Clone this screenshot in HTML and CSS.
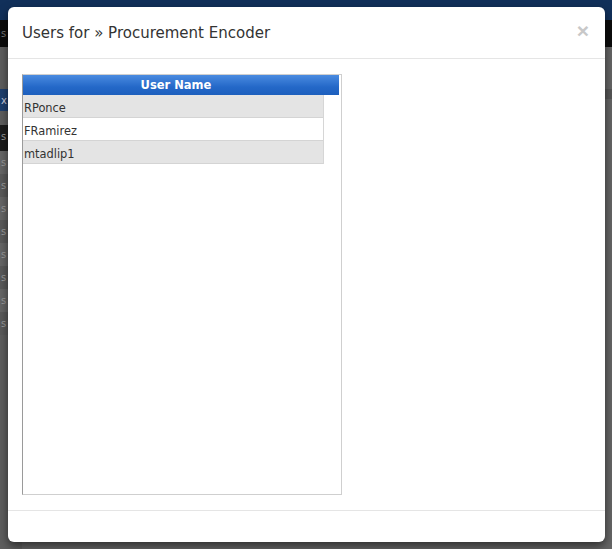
FILE: index.html
```html
<!DOCTYPE html>
<html>
<head>
<meta charset="utf-8">
<link rel="stylesheet" href="styles.css">
</head>
<body>
<div class="page">
  <div class="topbar"></div>
  <div class="subbar"><span class="subtext">s</span></div>
  <div class="main">
    <div class="sidebar">
      <div class="side-gap"></div>
      <div class="side-item blue">x</div>
      <div class="side-gap2"></div>
      <div class="side-item dark">s</div>
      <div class="side-item">s</div>
      <div class="side-item alt">s</div>
      <div class="side-item">s</div>
      <div class="side-item alt">s</div>
      <div class="side-item">s</div>
      <div class="side-item alt">s</div>
      <div class="side-item">s</div>
      <div class="side-item alt">s</div>
    </div>
    <div class="content">
      <div class="content-band"></div>
    </div>
  </div>
</div>

<div class="modal">
  <div class="modal-header">
    <h4 class="modal-title">Users for » Procurement Encoder</h4>
    <span class="close">×</span>
  </div>
  <div class="modal-body">
    <div class="grid">
      <div class="grid-head">User Name</div>
      <div class="grid-rows">
        <div class="grid-row odd">RPonce</div>
        <div class="grid-row">FRamirez</div>
        <div class="grid-row odd">mtadlip1</div>
      </div>
    </div>
  </div>
  <div class="modal-footer"></div>
</div>
</body>
</html>
```

FILE: styles.css
```css
html, body {
  margin: 0;
  padding: 0;
  height: 100%;
}
body {
  background: #666666;
  font-family: "DejaVu Sans", Verdana, sans-serif;
  overflow: hidden;
}
.page {
  display: flex;
  flex-direction: column;
  height: 549px;
}
.topbar {
  height: 20px;
  background: #11305a;
}
.subbar {
  height: 27px;
  background: #0c0c0c;
  color: #777;
  font-size: 10px;
  line-height: 27px;
}
.subtext {
  margin-left: 1px;
}
.main {
  flex: 1;
  display: flex;
}
.sidebar {
  width: 22px;
  display: flex;
  flex-direction: column;
  background: #5e5e5e;
}
.side-gap { height: 42px; }
.side-gap2 { height: 14px; }
.side-item {
  height: 23px;
  line-height: 23px;
  font-size: 10px;
  color: #9a9a9a;
  padding-left: 1px;
  background: #666;
}
.side-item.alt { background: #5a5a5a; }
.side-item.blue { background: #1e3f6e; color: #ccd; height: 22px; }
.side-item.dark { background: #1c1c1c; height: 26px; }
.content {
  flex: 1;
  background: #666;
}
.content-band {
  height: 10px;
  margin-top: 42px;
  background: #575757;
}

.modal {
  position: absolute;
  left: 8px;
  top: 7px;
  width: 597px;
  height: 535px;
  background: #fff;
  border-radius: 6px;
  box-shadow: 0 4px 10px rgba(0, 0, 0, 0.55);
  display: flex;
  flex-direction: column;
}
.modal-header {
  position: relative;
  height: 51px;
  border-bottom: 1px solid #e5e5e5;
  padding: 0 14px;
  display: flex;
  align-items: center;
}
.modal-title {
  margin: 0;
  font-size: 15px;
  font-weight: normal;
  color: #333;
  padding-top: 1px;
}
.close {
  position: absolute;
  right: 16px;
  top: 13px;
  font-size: 21px;
  font-weight: bold;
  color: #c8c8c8;
  line-height: 21px;
  font-family: "Liberation Sans", Arial, sans-serif;
}
.modal-body {
  padding: 15px 14px 15px 14px;
  flex: 0 0 auto;
}
.grid {
  width: 318px;
  height: 419px;
  border: 1px solid #cfcfcf;
  border-left: 1px solid #9a9a9a;
  background: #fff;
}
.grid-head {
  width: 306px;
  padding-right: 10px;
  height: 20px;
  line-height: 20px;
  background: linear-gradient(#4a8be0, #2468c8 60%, #1d5fbd);
  color: #fff;
  font-weight: bold;
  font-size: 11.5px;
  text-align: center;
}
.grid-rows {
  width: 300px;
  border-right: 1px solid #d6d6d6;
}
.grid-row {
  height: 19px;
  padding-top: 3px;
  line-height: 20px;
  border-bottom: 1px solid #d4d4d4;
  font-size: 11.4px;
  color: #333;
  padding-left: 1px;
  background: #fff;
}
.grid-row.odd {
  background: #e4e4e4;
}
.modal-footer {
  flex: 1;
  border-top: 1px solid #e5e5e5;
}
```
